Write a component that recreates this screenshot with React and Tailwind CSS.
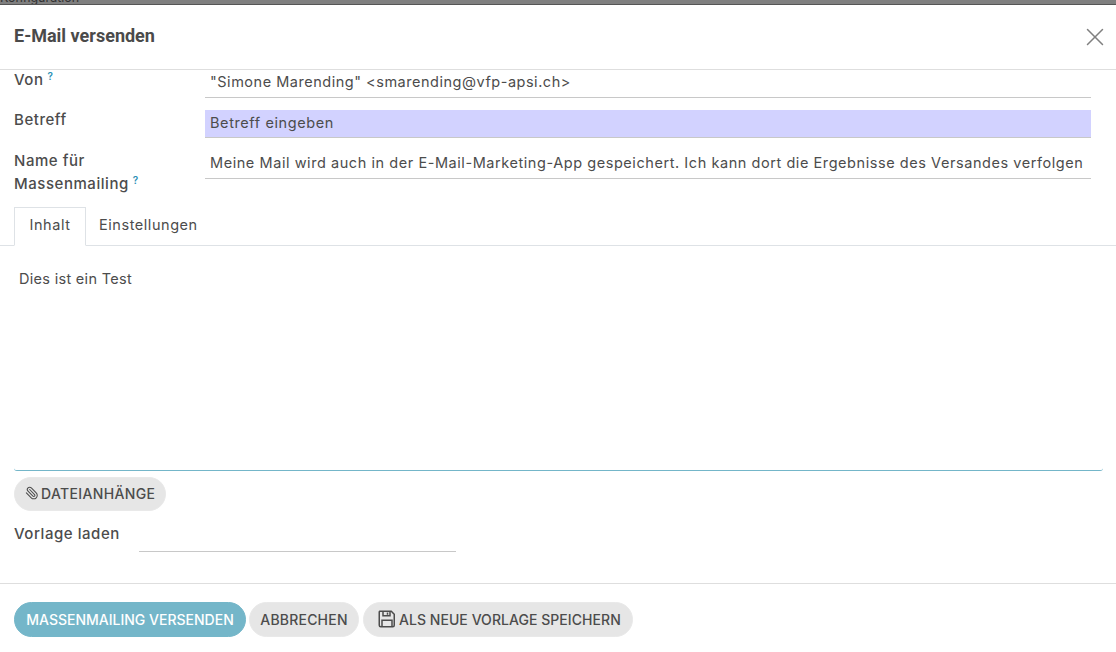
import { X, Paperclip } from "lucide-react"

const font = "font-['Inter','Liberation_Sans',sans-serif]"

function Help() {
  return <sup className="text-[10px] font-semibold text-[#2a8fb5] ml-[4px] tracking-normal">?</sup>
}

function Pill({ children, className = "" }) {
  return (
    <button className={`rounded-full border text-[14px] font-medium flex items-center ${className}`}>
      {children}
    </button>
  )
}

const grey = "bg-[#e6e6e6] border-[#e9e9e9] text-[#4c4c4c]"
const label = "font-medium text-[15px] tracking-[0.55px]"

export default function App() {
  return (
    <div className={`w-[1116px] h-[652px] overflow-hidden bg-white text-[#4c4c4c] text-[14.5px] ${font}`}>
      <div className="h-[5px] bg-[#7f7f7f] border-b border-[#555] overflow-hidden">
        <div className="text-[12.5px] leading-[5px] text-[#333] -mt-[5px]">Konfiguration</div>
      </div>

      <div className="h-[65px] border-b border-[#dedede] pl-[14px] pr-[6px] flex items-center justify-between">
        <h4 className="font-['Roboto',sans-serif] font-bold text-[18px] text-[#4a4a4a] -mt-[4px]">E-Mail versenden</h4>
        <X className="w-[30px] h-[30px] text-[#808080]" strokeWidth={1.2} />
      </div>

      <div className="pl-[14px] pr-[25px]">
        <div className="grid grid-cols-[191px_1fr] gap-y-[12px]">
          <div className={`${label} leading-[20px]`}>Von<Help /></div>
          <div className="h-[28px] border-b border-[#c8c8c8] pl-[5px] pb-[3px] flex items-center tracking-[0.52px]">"Simone Marending" &lt;smarending@vfp-apsi.ch&gt;</div>

          <div className={`${label} leading-[20px]`}>Betreff</div>
          <div className="h-[28px] bg-[#d2d2ff] border-b border-[#c8c8c8] pl-[5px] pb-[1px] flex items-center tracking-[0.6px]">Betreff eingeben</div>

          <div className={`${label} leading-[23px] -mt-[1px]`}>Name für<br />Massenmailing<Help /></div>
          <div className="h-[29px] border-b border-[#c8c8c8] pl-[5px] pb-[2px] flex items-center whitespace-nowrap overflow-hidden tracking-[0.56px]">Meine Mail wird auch in der E-Mail-Marketing-App gespeichert. Ich kann dort die Ergebnisse des Versandes verfolgen</div>
        </div>
      </div>

      <div className="mt-[12px] h-[39px] border-b border-[#dee2e6] pl-[14px] flex tracking-[0.55px]">
        <div className="h-[39px] w-[72px] pb-[3px] border border-[#dee2e6] border-b-white bg-white flex items-center justify-center">Inhalt</div>
        <div className="h-[38px] px-[13px] pb-[3px] flex items-center">Einstellungen</div>
      </div>

      <div className="ml-[14px] mr-[13px] h-[225px] border-b border-[#74b6c9] rounded-b-[3px] pl-[5px] pt-[23px] leading-[20px] tracking-[0.3px]">Dies ist ein Test</div>

      <div className="pl-[14px] mt-[6px]">
        <Pill className={`${grey} w-[152px] h-[34px] pl-[10px] pb-[2px] gap-[2px] tracking-[0.35px]`}>
          <Paperclip className="w-[14px] h-[14px] -scale-x-100" strokeWidth={1.8} />
          DATEIANHÄNGE
        </Pill>
        <div className="flex mt-[13px] h-[28px]">
          <div className={`${label} w-[125px] leading-[20px]`}>Vorlage laden</div>
          <div className="w-[317px] h-[28px] border-b border-[#c8c8c8]" />
        </div>
      </div>

      <div className="mt-[31px] border-t border-[#dedede] pl-[14px] pt-[18px] flex gap-[3px]">
        <Pill className="h-[35px] w-[232px] pb-[1px] justify-center bg-[#74b6c9] border-[#74b6c9] text-white">MASSENMAILING VERSENDEN</Pill>
        <Pill className={`${grey} h-[35px] w-[110px] pb-[1px] justify-center tracking-[0.2px]`}>ABBRECHEN</Pill>
        <Pill className={`${grey} h-[35px] ml-[1px] w-[270px] pl-[14px] pb-[1px] gap-[3px] tracking-[0.05px]`}>
          <svg viewBox="0 0 18 18" className="w-[18px] h-[18px]" fill="none" stroke="currentColor" strokeWidth="1.5">
            <path d="M1.75 1.25h11.5l3 3v11a1.5 1.5 0 0 1-1.5 1.5H2.75a1.5 1.5 0 0 1-1.5-1.5V2.25a1 1 0 0 1 .5-1z" />
            <path d="M5 1.5v4.25h7V1.5" />
            <path d="M9.5 2.5v2.25" />
            <path d="M4 16.5v-6.25h10v6.25" />
          </svg>
          ALS NEUE VORLAGE SPEICHERN
        </Pill>
      </div>
    </div>
  )
}
